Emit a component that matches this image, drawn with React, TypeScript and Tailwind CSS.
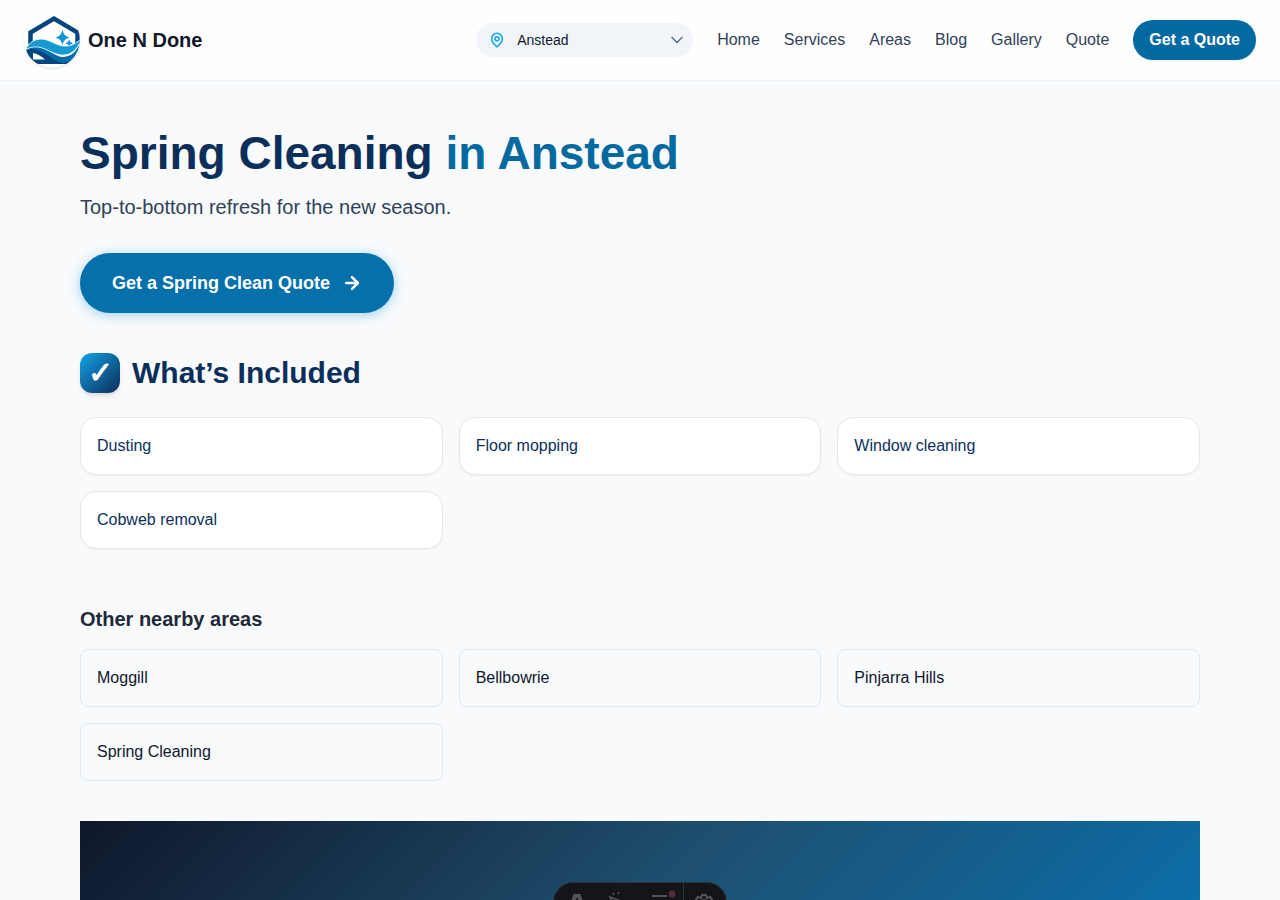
import { ArrowRight, ChevronDown, MapPin } from "lucide-react";

const navLinks = ["Home", "Services", "Areas", "Blog", "Gallery", "Quote"];
const included = ["Dusting", "Floor mopping", "Window cleaning", "Cobweb removal"];
const nearby = ["Moggill", "Bellbowrie", "Pinjarra Hills", "Spring Cleaning"];

function Logo() {
  return (
    <svg viewBox="0 0 56 56" className="size-14 rounded-full bg-white shadow-sm" aria-hidden="true">
      <path d="M6.500 32V20.500L30 6.500L53.500 20.500V32" fill="none" stroke="#03457c" strokeWidth="4.500" />
      <path d="M38.500 18Q39.800 24.200 45.500 25.500Q39.800 26.800 38.500 33Q37.200 26.800 31.500 25.500Q37.200 24.200 38.500 18Z" fill="#1596d1" />
      <path d="M45.200 27.500Q45.900 30.600 49 31.300Q45.900 32 45.200 35Q44.500 32 41.400 31.300Q44.500 30.600 45.200 27.500Z" fill="#1596d1" />
      <path d="M2 38C11 32 18 36 24 41C31 47 39 50 48 48L43 52H10Q4 46 2 38Z" fill="#03457c" />
      <path d="M3 36C18 30 27 43 38 45C47 45 52 40 56 31C54 43 48 50 40 51C27 50 23 37 3 36Z" fill="#066ca6" />
      <path d="M1.500 37.500C6 28 15 25.500 23 28C34 32 42 40 57 27C54 38 46 44 37 43C24 41 17 30 1.500 37.500Z" fill="#159bd2" stroke="#fff" strokeWidth="0.800" />
      <path d="M9 41Q15 42 21 47.500H9Z" fill="#fff" />
    </svg>
  );
}

function DevToolbar() {
  return (
    <div aria-hidden="true" className="fixed bottom-0 left-1/2 h-[18px] w-[174px] -translate-x-1/2 overflow-hidden">
      <div className="flex h-10 rounded-full border border-[#30323a] bg-[#13151a] text-[#53545a]">
        <svg viewBox="0 -1 172 38" className="w-full" fill="none" stroke="currentColor">
          <path d="M17 24L21 12H25L29 24" strokeWidth="4" />
          <path d="M56 13L72 19L65 22L62 28ZM60 11L59 9M64 10L65 8" strokeWidth="1.500" />
          <path d="M98 12H113M98 19H113" strokeWidth="2" />
          <circle cx="118" cy="10" r="3.500" fill="#522b3c" stroke="none" />
          <path d="M129.500 -1V38" stroke="#30323a" />
          <path d="M143 21L141 17L144 13L147 14L148 11H152L153 14L156 13L159 17L157 21" strokeWidth="2" />
          <circle cx="150" cy="19" r="3" strokeWidth="2" />
        </svg>
      </div>
    </div>
  );
}

export default function App() {
  return (
    <div className="flex min-h-screen flex-col bg-[#f8fafc] font-['Liberation_Sans',sans-serif] text-slate-900">
      <header className="flex items-center justify-between border-b border-slate-200/60 bg-[#fefefe] px-6 py-3">
        <a href="#home" className="flex items-center gap-2 text-xl font-bold">
          <Logo />
          One N Done
        </a>
        <div className="flex items-center gap-6">
          <div className="relative flex items-center">
            <MapPin className="pointer-events-none absolute left-[13px] size-4 text-[#0ea5e9]" strokeWidth={2.25} aria-hidden="true" />
            <select
              aria-label="Choose your area"
              defaultValue="Anstead"
              className="h-[34px] w-[217px] appearance-none rounded-full bg-slate-100 pr-9 pl-[41px] text-sm text-slate-900"
            >
              <option>Anstead</option>
              {nearby.slice(0, 3).map((area) => (
                <option key={area}>{area}</option>
              ))}
            </select>
            <ChevronDown className="pointer-events-none absolute right-1.5 size-5 text-slate-500" aria-hidden="true" />
          </div>
          <nav className="flex items-center gap-6 text-slate-700">
            {navLinks.map((link) => (
              <a key={link} href={`#${link.toLowerCase()}`}>
                {link}
              </a>
            ))}
            <a href="#quote" className="rounded-full bg-[#0369a1] px-4 py-2 font-bold text-white shadow-xs">
              Get a Quote
            </a>
          </nav>
        </div>
      </header>

      <main className="mx-auto flex w-full max-w-[1120px] grow flex-col pt-12">
        <h1 className="text-[46px] leading-[48px] font-bold text-[#0b2f5b]">
          Spring Cleaning <span className="text-[#0369a1]">in Anstead</span>
        </h1>
        <p className="mt-4 text-xl text-slate-700">Top-to-bottom refresh for the new season.</p>
        <a
          href="#quote"
          className="mt-8 flex items-center gap-3 self-start rounded-full bg-[#0670aa] px-8 py-4 text-lg font-bold text-white shadow-[0_2px_12px_rgba(14,150,220,0.4)]"
        >
          Get a Spring Clean Quote
          <ArrowRight className="size-5" strokeWidth={3} aria-hidden="true" />
        </a>

        <section className="mt-10">
          <h2 className="flex items-center gap-3 text-3xl font-bold text-[#0b2f5b]">
            <span
              aria-hidden="true"
              className="flex size-10 items-center justify-center rounded-xl bg-linear-to-br from-[#0ea5e9] to-[#0b2f5b] text-white shadow-md"
            >
              ✓
            </span>
            What’s Included
          </h2>
          <ul className="mt-6 grid grid-cols-3 gap-4">
            {included.map((item) => (
              <li key={item} className="rounded-2xl border border-gray-200 bg-white p-4 text-[#0b2f5b] shadow-xs">
                {item}
              </li>
            ))}
          </ul>
        </section>

        <section className="mt-14">
          <h2 className="text-xl font-bold text-gray-800">Other nearby areas</h2>
          <ul className="mt-4 grid grid-cols-3 gap-4">
            {nearby.map((area) => (
              <li key={area}>
                <a href={`#${area.toLowerCase().replace(" ", "-")}`} className="block rounded-lg border border-slate-200 p-4">
                  {area}
                </a>
              </li>
            ))}
          </ul>
        </section>

        <div className="mt-10 grow bg-[#0874b4] bg-[linear-gradient(135deg,#0f172a_0%,#1e4e6e_48%,#0874b4_100%)] bg-[length:100%_200px] bg-no-repeat" />
      </main>
      <DevToolbar />
    </div>
  );
}
